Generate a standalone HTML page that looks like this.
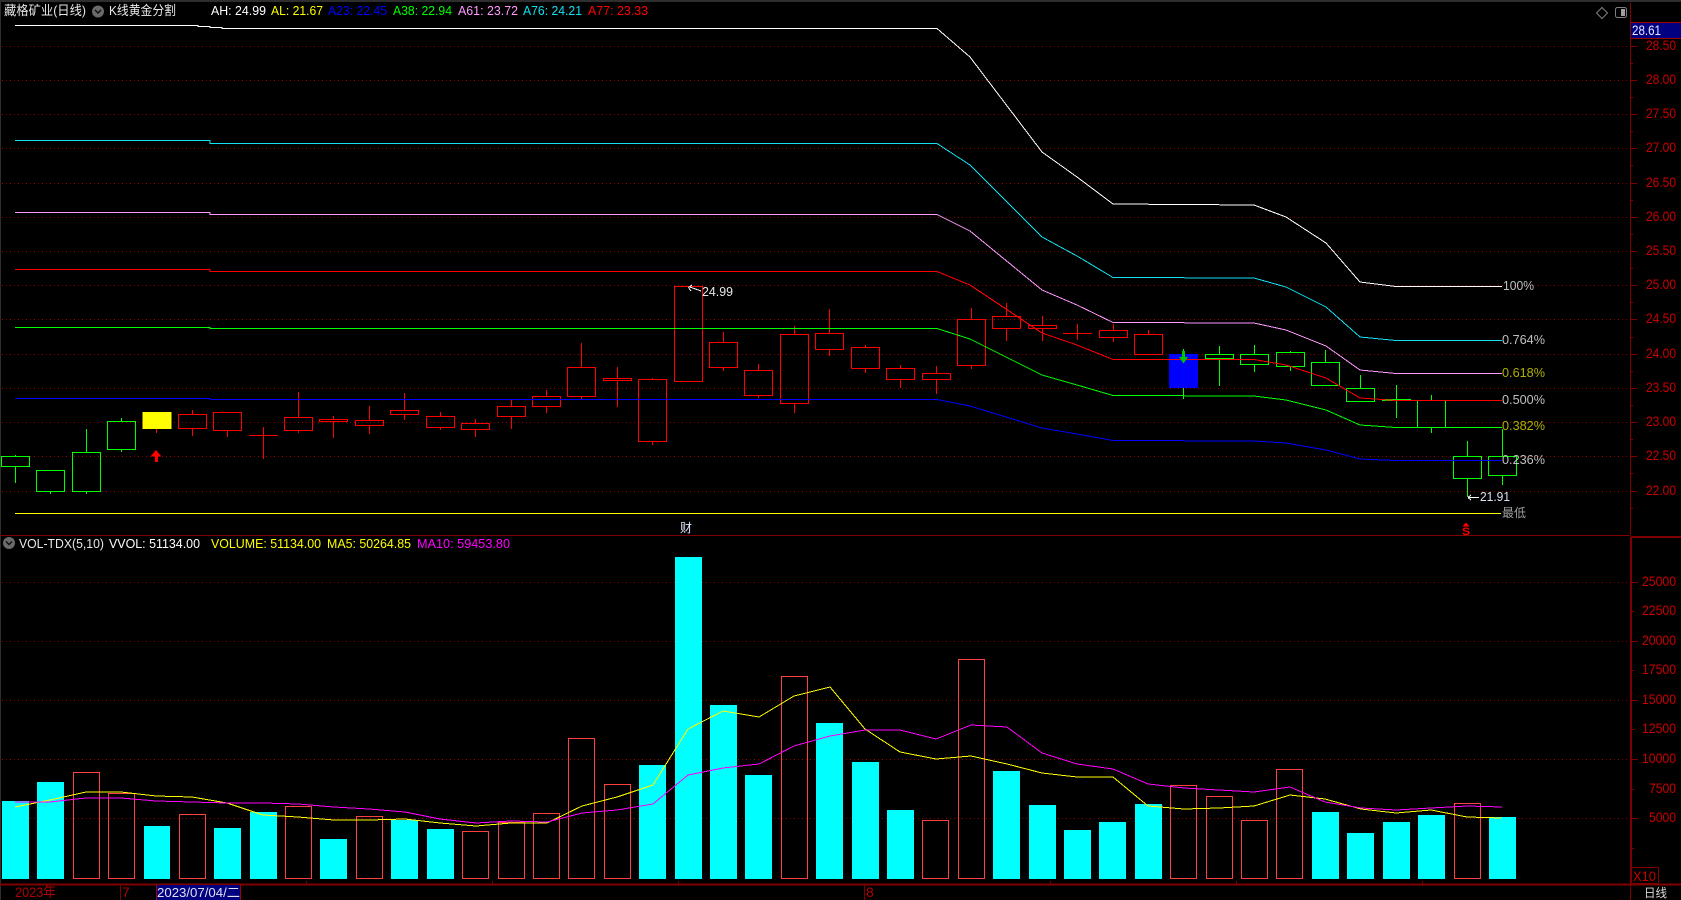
<!DOCTYPE html>
<html><head><meta charset="utf-8"><style>
html,body{margin:0;padding:0;background:#000;width:1681px;height:900px;overflow:hidden}
svg{display:block}
text{font-family:"Liberation Sans","Noto Sans CJK SC",sans-serif;font-size:13px}
.a text{font-size:14px;fill:#c80000}
.l{fill:none;shape-rendering:crispEdges}
.p text{fill:#c0c0c0}
</style></head><body>
<svg width="1681" height="900" viewBox="0 0 1681 900">
<rect width="1681" height="900" fill="#000"/>
<g shape-rendering="crispEdges">
<rect x="0" y="0" width="1681" height="2" fill="#2e2e2e"/>
<rect x="0" y="0" width="1" height="900" fill="#2e2e2e"/>
<g stroke="#900000" stroke-dasharray="1 3" fill="none">
<path d="M2 46.5H1630M2 80.5H1630M2 114.5H1630M2 148.5H1630M2 183.5H1630M2 217.5H1630M2 251.5H1630M2 285.5H1630M2 319.5H1630M2 354.5H1630M2 388.5H1630M2 422.5H1630M2 456.5H1630M2 491.5H1630"/>
<path d="M2 582.5H1630M2 641.5H1630M2 700.5H1630M2 759.5H1630M2 818.5H1630"/>
</g>
<path d="M1630.5 3V535M0 535.5H1630M1630.5 884V900M120.5 884V900M864.5 884V900" stroke="#800000" fill="none"/>
<path d="M1631 537H1681M1631 537V884M0 884.5H1681" stroke="#800000" stroke-width="2" fill="none"/>
<rect x="1631.5" y="867.5" width="27" height="16" fill="none" stroke="#800000"/>
<path stroke="#800000" fill="none" d="M1630 46.5h7M1630 63.5h3M1630 80.5h7M1630 97.5h3M1630 114.5h7M1630 131.5h3M1630 148.5h7M1630 165.5h3M1630 183.5h7M1630 200.5h3M1630 217.5h7M1630 234.5h3M1630 251.5h7M1630 268.5h3M1630 285.5h7M1630 302.5h3M1630 319.5h7M1630 337.5h3M1630 354.5h7M1630 371.5h3M1630 388.5h7M1630 405.5h3M1630 422.5h7M1630 439.5h3M1630 456.5h7M1630 473.5h3M1630 491.5h7M1630 508.5h3
M1631 582.5h7M1631 611.5h3M1631 641.5h7M1631 670.5h3M1631 700.5h7M1631 729.5h3M1631 759.5h7M1631 789.5h3M1631 818.5h7M1631 848.5h3
M306.5 881v3M492.5 881v3M678.5 881v3M1050.5 881v3M1236.5 881v3M1422.5 881v3"/>
<rect x="1631" y="22" width="50" height="17" fill="#000080"/>
<path d="M1631 22.5H1681M1631 38.5H1681" stroke="#a00000" fill="none"/>
<rect x="156" y="885" width="85" height="15" fill="#000080"/>
<path d="M156.5 884V900M240.5 884V900" stroke="#a00000" fill="none"/>
</g>
<g shape-rendering="crispEdges">
<path d="M2 801H29V879H2ZM37 782H64V879H37ZM144 826H170V879H144ZM214 828H241V879H214ZM250 812H277V879H250ZM320 839H347V879H320ZM391 820H418V879H391ZM427 829H454V879H427ZM639 765H666V879H639ZM675 557H702V879H675ZM710 705H737V879H710ZM745 775H772V879H745ZM816 723H843V879H816ZM852 762H879V879H852ZM887 810H914V879H887ZM993 771H1020V879H993ZM1029 805H1056V879H1029ZM1064 830H1091V879H1064ZM1099 822H1126V879H1099ZM1135 804H1162V879H1135ZM1312 812H1339V879H1312ZM1347 833H1374V879H1347ZM1383 822H1410V879H1383ZM1418 815H1445V879H1418ZM1489 817H1516V879H1489Z" fill="#00ffff"/>
<path fill="none" stroke="#ff4040" d="M73.5 772.5h26v106h-26zM108.5 793.5h26v85h-26zM179.5 814.5h26v64h-26zM285.5 806.5h26v72h-26zM356.5 816.5h26v62h-26zM462.5 831.5h26v47h-26zM498.5 822.5h26v56h-26zM533.5 813.5h26v65h-26zM568.5 738.5h26v140h-26zM604.5 784.5h26v94h-26zM781.5 676.5h26v202h-26zM922.5 820.5h26v58h-26zM958.5 659.5h26v219h-26zM1170.5 785.5h26v93h-26zM1206.5 796.5h26v82h-26zM1241.5 820.5h26v58h-26zM1276.5 769.5h26v109h-26zM1454.5 803.5h26v75h-26z"/>
</g>
<g class="l" stroke-width="1">
<polyline stroke="#ffff00" points="15,807 50,800 86,792 121,792 156,796 192,797 227,803 263,815 298,817 334,820 369,820 405,819 440,823 476,826 511,823 547,823 582,806 617,797 653,785 688,729 723,711 759,717 794,696 830,687 865,729 900,752 936,759 971,756 1007,764 1042,773 1077,777 1113,777 1148,806 1184,809 1219,808 1254,806 1290,795 1325,799 1361,809 1396,813 1431,810 1467,817 1502,818"/>
<polyline stroke="#ff00ff" points="15,802 50,802 86,798 121,798 156,801 192,802 227,803 263,803 298,804 334,807 369,809 405,812 440,819 476,823 511,821 547,822 582,813 617,810 653,804 688,775 723,768 759,764 794,746 830,736 865,730 900,730 936,739 971,725 1007,727 1042,753 1077,764 1113,769 1148,784 1184,788 1219,790 1254,792 1290,787 1325,802 1361,808 1396,810 1431,808 1467,806 1502,807"/>
</g>
<g shape-rendering="crispEdges">
<rect x="142.5" y="412" width="29" height="17" fill="#ffff00"/>
<rect x="1169" y="354" width="29" height="34" fill="#0000ff"/>
<g fill="none" stroke="#ff0000">
<path d="M156.5 429V433M192.5 410V414M192.5 429V436M227.5 431V437M249 435.5H278M263.5 427V459M298.5 392V417M298.5 431V433M333.5 416V419M333.5 422V438M369.5 406V420M369.5 426V434M404.5 393V410M404.5 415V420M440.5 412V416M440.5 428V430M475.5 419V423M475.5 430V437M511.5 400V406M511.5 417V429M546.5 390V396M546.5 407V413M581.5 343V367M581.5 396V399M617.5 367V378M617.5 381V407M652.5 378V379M652.5 442V445M723.5 332V342M723.5 368V371M758.5 364V370M758.5 396V398M794.5 326V334M794.5 404V413M829.5 309V333M829.5 350V356M865.5 345V347M865.5 369V373M900.5 365V368M900.5 380V388M936.5 366V373M936.5 380V394M971.5 308V319M971.5 365V369M1006.5 303V316M1006.5 329V341M1042.5 316V325M1042.5 329V341M1063 333.5H1092M1077.5 324V340M1113.5 324V330M1113.5 338V342M1148.5 330V334"/>
<rect x="178.5" y="414.5" width="28" height="14"/><rect x="213.5" y="412.5" width="28" height="18"/><rect x="284.5" y="417.5" width="28" height="13"/><rect x="319.5" y="419.5" width="28" height="2"/><rect x="355.5" y="420.5" width="28" height="5"/><rect x="390.5" y="410.5" width="28" height="4"/><rect x="426.5" y="416.5" width="28" height="11"/><rect x="461.5" y="423.5" width="28" height="6"/><rect x="497.5" y="406.5" width="28" height="10"/><rect x="532.5" y="396.5" width="28" height="10"/><rect x="567.5" y="367.5" width="28" height="29"/><rect x="603.5" y="378.5" width="28" height="2"/><rect x="638.5" y="379.5" width="28" height="62"/><rect x="674.5" y="286.5" width="28" height="95"/><rect x="709.5" y="342.5" width="28" height="25"/><rect x="744.5" y="370.5" width="28" height="25"/><rect x="780.5" y="334.5" width="28" height="69"/><rect x="815.5" y="333.5" width="28" height="16"/><rect x="851.5" y="347.5" width="28" height="21"/><rect x="886.5" y="368.5" width="28" height="11"/><rect x="922.5" y="373.5" width="28" height="6"/><rect x="957.5" y="319.5" width="28" height="46"/><rect x="992.5" y="316.5" width="28" height="12"/><rect x="1028.5" y="325.5" width="28" height="3"/><rect x="1099.5" y="330.5" width="28" height="7"/><rect x="1134.5" y="334.5" width="28" height="20"/>
</g>
<g fill="none" stroke="#00ff00">
<path d="M15.5 455V456M15.5 467V483M50.5 492V494M86.5 429V452M86.5 492V494M121.5 418V421M121.5 450V452M1183.5 349V354M1183.5 388V399M1219.5 346V354M1219.5 359V386M1254.5 345V354M1254.5 365V372M1290.5 351V352M1290.5 367V371M1325.5 350V362M1360.5 375V388M1396.5 385V418M1431.5 395V400M1431.5 427V433M1467.5 441V456M1467.5 479V497M1502.5 429V456M1502.5 476V485"/>
<rect x="1.5" y="456.5" width="28" height="10"/><rect x="36.5" y="470.5" width="28" height="21"/><rect x="72.5" y="452.5" width="28" height="39"/><rect x="107.5" y="421.5" width="28" height="28"/><rect x="1205.5" y="354.5" width="28" height="4"/><rect x="1240.5" y="354.5" width="28" height="10"/><rect x="1276.5" y="352.5" width="28" height="14"/><rect x="1311.5" y="362.5" width="28" height="23"/><rect x="1346.5" y="388.5" width="28" height="13"/><rect x="1417.5" y="400.5" width="28" height="27"/><rect x="1453.5" y="456.5" width="28" height="22"/><rect x="1488.5" y="456.5" width="28" height="19"/>
<rect x="1382" y="399" width="29" height="2" fill="#00ff00" stroke="none"/>
</g>
</g>
<g class="l" stroke-width="1">
<polyline stroke="#ffffff" points="15,25.5 198,25.5 198,26.5 210,26.5 210,27.5 222,27.5 222,28.5 937,28.5 970,57 1042,152 1077,177 1113,204 1254,205 1286,217 1326,243 1360,282 1396,286.5 1502,286.5"/>
<polyline stroke="#10e0f0" points="15,140.5 210,140.5 210,143.5 937,143.5 970,165 1042,237 1077,256 1113,277.5 1254,278 1286,287 1326,307 1360,337 1396,340.5 1502,340.5"/>
<polyline stroke="#ff99ff" points="15,212.5 210,212.5 210,214.5 937,214.5 970,231 1042,290 1077,305 1113,322.5 1254,323 1286,330 1326,346 1360,370 1396,373.5 1502,373.5"/>
<polyline stroke="#ff0000" points="15,269.5 210,269.5 210,271.5 937,271.5 970,285 1042,333 1077,345 1113,359.5 1254,359.5 1286,365 1326,378 1360,398 1396,400.5 1502,400.5"/>
<polyline stroke="#00ff00" points="15,327.5 210,327.5 210,328.5 937,328.5 970,339 1042,375 1077,385 1113,395.5 1254,396 1286,400 1326,410 1360,425 1396,427.5 1502,427.5"/>
<polyline stroke="#0000ff" points="15,398.5 210,398.5 210,399.5 937,399.5 970,406 1042,428 1077,434 1113,440.5 1254,441 1286,443 1326,450 1360,459 1396,460.5 1502,460.5"/>
<polyline stroke="#ffff00" points="15,513.5 1501,513.5"/>
</g>
<path d="M156 450L161.500 456.500H158V462H155V456.500H150.500Z" fill="#ff0000"/>
<path d="M1182 351H1185V357H1188L1183.500 363.500L1179 357H1182Z" fill="#00c800"/>
<g fill="none" stroke="#ffffff" shape-rendering="crispEdges">
<path d="M690 287L701 291M688.500 287.500L692 285M688.500 287.500L691 291"/>
<path d="M1469 497.500H1479M1468 497.500L1471 495M1468 497.500L1471 500"/>
</g>
<text x="702" y="296" textLength="31" lengthAdjust="spacingAndGlyphs" fill="#e8e8e8">24.99</text>
<text x="1480" y="501" textLength="30" lengthAdjust="spacingAndGlyphs" fill="#d8e4f0">21.91</text>
<g class="p">
<text x="1503" y="290" textLength="31" lengthAdjust="spacingAndGlyphs">100%</text>
<text x="1502" y="344" textLength="43" lengthAdjust="spacingAndGlyphs">0.764%</text>
<text x="1502" y="377" textLength="43" lengthAdjust="spacingAndGlyphs" style="fill:#b0b000">0.618%</text>
<text x="1502" y="404" textLength="43" lengthAdjust="spacingAndGlyphs">0.500%</text>
<text x="1502" y="430" textLength="43" lengthAdjust="spacingAndGlyphs" style="fill:#b0b000">0.382%</text>
<text x="1502" y="464" textLength="43" lengthAdjust="spacingAndGlyphs">0.236%</text>
<text x="1502" y="517" textLength="24" lengthAdjust="spacingAndGlyphs" style="font-size:12px;fill:#a0a0a0">最低</text>
</g>
<text x="680" y="532" style="font-size:12px" fill="#e0e8ff">财</text>
<path d="M1466 522.500L1469.500 526.500H1462.500Z" fill="#ff0000"/>
<text x="1462" y="535" textLength="8" lengthAdjust="spacingAndGlyphs" style="font-size:11px;font-weight:bold" fill="#ff0000">S</text>

<text x="4" y="15" textLength="82" lengthAdjust="spacingAndGlyphs" fill="#e8e8e8">藏格矿业(日线)</text>
<circle cx="98" cy="11.500" r="6" fill="#6a6a6a"/>
<path d="M95 10L98 13L101 10" fill="none" stroke="#111" stroke-width="1.500"/>
<text x="109" y="15" textLength="67" lengthAdjust="spacingAndGlyphs" fill="#e8e8e8">K线黄金分割</text>
<text x="211" y="15" textLength="55" lengthAdjust="spacingAndGlyphs" fill="#ffffff">AH: 24.99</text>
<text x="271" y="15" textLength="52" lengthAdjust="spacingAndGlyphs" fill="#ffff00">AL: 21.67</text>
<text x="328" y="15" textLength="59" lengthAdjust="spacingAndGlyphs" fill="#0000ff">A23: 22.45</text>
<text x="393" y="15" textLength="59" lengthAdjust="spacingAndGlyphs" fill="#00ff00">A38: 22.94</text>
<text x="458" y="15" textLength="60" lengthAdjust="spacingAndGlyphs" fill="#ff99ff">A61: 23.72</text>
<text x="523" y="15" textLength="59" lengthAdjust="spacingAndGlyphs" fill="#10e0f0">A76: 24.21</text>
<text x="588" y="15" textLength="60" lengthAdjust="spacingAndGlyphs" fill="#ff0000">A77: 23.33</text>

<circle cx="9" cy="543" r="6" fill="#6a6a6a"/>
<path d="M6 541.500L9 544.500L12 541.500" fill="none" stroke="#111" stroke-width="1.500"/>
<text x="19" y="548" textLength="85" lengthAdjust="spacingAndGlyphs" fill="#e8e8e8">VOL-TDX(5,10)</text>
<text x="109" y="548" textLength="91" lengthAdjust="spacingAndGlyphs" fill="#ffffff">VVOL: 51134.00</text>
<text x="211" y="548" textLength="110" lengthAdjust="spacingAndGlyphs" fill="#ffff00">VOLUME: 51134.00</text>
<text x="327" y="548" textLength="84" lengthAdjust="spacingAndGlyphs" fill="#ffff00">MA5: 50264.85</text>
<text x="417" y="548" textLength="93" lengthAdjust="spacingAndGlyphs" fill="#ff00ff">MA10: 59453.80</text>

<path d="M1602 7.500L1607.500 13L1602 18.500L1596.500 13Z" fill="none" stroke="#808080"/>
<rect x="1615.500" y="7.500" width="11" height="10" rx="2" fill="#000" stroke="#808080"/>
<rect x="1621" y="9" width="4" height="7" fill="#a0a0a0"/>

<text x="1632" y="35" textLength="29" lengthAdjust="spacingAndGlyphs" style="font-size:14px" fill="#e8e8ff">28.61</text>

<g class="a">
<text x="1646" y="50" textLength="30" lengthAdjust="spacingAndGlyphs">28.50</text>
<text x="1646" y="84" textLength="30" lengthAdjust="spacingAndGlyphs">28.00</text>
<text x="1646" y="118" textLength="30" lengthAdjust="spacingAndGlyphs">27.50</text>
<text x="1646" y="152" textLength="30" lengthAdjust="spacingAndGlyphs">27.00</text>
<text x="1646" y="187" textLength="30" lengthAdjust="spacingAndGlyphs">26.50</text>
<text x="1646" y="221" textLength="30" lengthAdjust="spacingAndGlyphs">26.00</text>
<text x="1646" y="255" textLength="30" lengthAdjust="spacingAndGlyphs">25.50</text>
<text x="1646" y="289" textLength="30" lengthAdjust="spacingAndGlyphs">25.00</text>
<text x="1646" y="323" textLength="30" lengthAdjust="spacingAndGlyphs">24.50</text>
<text x="1646" y="358" textLength="30" lengthAdjust="spacingAndGlyphs">24.00</text>
<text x="1646" y="392" textLength="30" lengthAdjust="spacingAndGlyphs">23.50</text>
<text x="1646" y="426" textLength="30" lengthAdjust="spacingAndGlyphs">23.00</text>
<text x="1646" y="460" textLength="30" lengthAdjust="spacingAndGlyphs">22.50</text>
<text x="1646" y="495" textLength="30" lengthAdjust="spacingAndGlyphs">22.00</text>
<text x="1642" y="586" textLength="34" lengthAdjust="spacingAndGlyphs">25000</text>
<text x="1642" y="615" textLength="34" lengthAdjust="spacingAndGlyphs">22500</text>
<text x="1642" y="645" textLength="34" lengthAdjust="spacingAndGlyphs">20000</text>
<text x="1642" y="674" textLength="34" lengthAdjust="spacingAndGlyphs">17500</text>
<text x="1642" y="704" textLength="34" lengthAdjust="spacingAndGlyphs">15000</text>
<text x="1642" y="733" textLength="34" lengthAdjust="spacingAndGlyphs">12500</text>
<text x="1642" y="763" textLength="34" lengthAdjust="spacingAndGlyphs">10000</text>
<text x="1649" y="793" textLength="27" lengthAdjust="spacingAndGlyphs">7500</text>
<text x="1649" y="822" textLength="27" lengthAdjust="spacingAndGlyphs">5000</text>
<text x="1633" y="881" textLength="23" lengthAdjust="spacingAndGlyphs">X10</text>
<text x="15" y="897" textLength="41" lengthAdjust="spacingAndGlyphs" style="fill:#b00000">2023年</text>
<text x="122" y="897" style="fill:#b00000">7</text>
<text x="866" y="897" style="fill:#b00000">8</text>
</g>
<text x="157" y="897" textLength="83" lengthAdjust="spacingAndGlyphs" style="font-size:13px" fill="#e0e0f0">2023/07/04/二</text>
<text x="1644" y="897" textLength="23" lengthAdjust="spacingAndGlyphs" style="font-size:12px" fill="#d8d8d8">日线</text>
</svg>
</body></html>
